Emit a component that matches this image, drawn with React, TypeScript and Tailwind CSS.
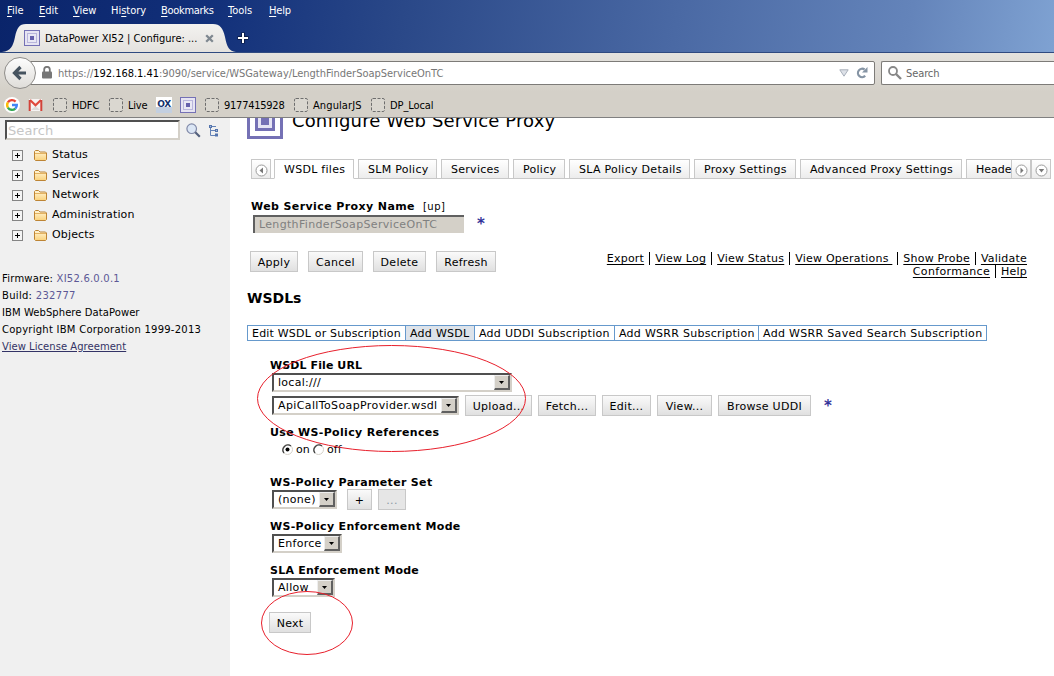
import React from "react";

const UI = "font-['DejaVu_Sans_Condensed','DejaVu_Sans',sans-serif] [font-stretch:condensed]";

function PowerIcon({ size }: { size: number }) {
  return (
    <svg width={size} height={size} viewBox="0 0 16 16" className="shrink-0">
      <rect x=".5" y=".5" width="15" height="15" fill="#e6e4f2" stroke="#7571b5" />
      <rect x="3.5" y="3.5" width="9" height="9" fill="#e9e8f4" stroke="#b9b6dc" />
      <rect x="6" y="6" width="4" height="4" fill="#6560ac" />
    </svg>
  );
}

function Menu({ k, pre = "", rest, w }: { k: string; pre?: string; rest: string; w: string }) {
  return (
    <span className={`${w} shrink-0 whitespace-nowrap`}>
      {pre}
      <span className="underline underline-offset-2">{k}</span>
      {rest}
    </span>
  );
}

function Bookmark({ label, w }: { label: string; w: string }) {
  return (
    <div className={`${w} flex shrink-0 items-center gap-[5px] whitespace-nowrap`}>
      <svg width="14" height="14" viewBox="0 0 14 14" className="shrink-0">
        <rect x=".5" y=".5" width="13" height="13" rx="1.5" fill="#dad7d0" stroke="#6e6e6e" strokeDasharray="3 1.5" />
      </svg>
      <span className="pt-[3px]">{label}</span>
    </div>
  );
}

function Browser() {
  return (
    <div className={`${UI} h-[118px] shrink-0 text-[11px] text-black`}>
      <div className="flex h-[53px] flex-col border-b border-[#2f4a80] bg-[linear-gradient(100deg,#0a246a_0%,#12307a_20%,#2a4888_38%,#4a69a4_64%,#6484ba_86%,#7fa2d2_100%)]">
        <div className="flex h-[25px] items-center pb-[2px] pl-[7px] text-white">
          <Menu k="F" rest="ile" w="w-8" />
          <Menu k="E" rest="dit" w="w-[34px]" />
          <Menu k="V" rest="iew" w="w-[38px]" />
          <Menu pre="Hi" k="s" rest="tory" w="w-[50px]" />
          <Menu k="B" rest="ookmarks" w="w-[67px] tracking-[-0.3px]" />
          <Menu k="T" rest="ools" w="w-[41px]" />
          <Menu k="H" rest="elp" w="w-8 tracking-[-0.2px]" />
        </div>
        <div className="flex h-[28px]">
          <div className="relative h-[28px] w-[236px] shrink-0">
            <svg width="236" height="28" className="absolute inset-0">
              <defs>
                <linearGradient id="tab" x1="0" y1="0" x2="0" y2="1">
                  <stop offset="0" stopColor="#f3f2f0" />
                  <stop offset="1" stopColor="#e4e2de" />
                </linearGradient>
              </defs>
              <path d="M2 28C11 27 13 22 15 13C17 4 19 0 26 0H213C220 0 223 4 225 13C227 23 229 27 236 28Z" fill="url(#tab)" />
            </svg>
            <div className="relative flex h-[28px] items-center pl-6">
              <PowerIcon size={16} />
              <span className="ml-[5px] w-[160px] whitespace-nowrap pt-[2px]">DataPower XI52 | Configure: ...</span>
              <svg width="9" height="9" viewBox="0 0 9 9">
                <path d="M1.2 1.2 7.8 7.8M7.8 1.2 1.2 7.8" stroke="#7f8890" strokeWidth="2.3" />
              </svg>
            </div>
          </div>
          <svg width="14" height="14" viewBox="0 0 14 14" className="mt-[7px]">
            <path d="M7 1.5V12.5M1.5 7H12.5" stroke="#0b1c48" strokeWidth="4" />
            <path d="M7 2V12M2 7H12" stroke="#fff" strokeWidth="2" />
          </svg>
        </div>
      </div>
      <div className="flex h-[65px] flex-col border-b border-[#808080] bg-[linear-gradient(#e4e2de,#d4d0c8_60%)]">
        <div className="flex h-[39px] items-center pl-1">
          <div className="z-10 flex h-8 w-8 shrink-0 items-center justify-center rounded-full border border-[#8f8d8a] bg-[linear-gradient(#fdfdfd,#dfddd9)]">
            <svg width="16" height="16" viewBox="0 0 16 16">
              <path d="M8.5 2 2.5 8 8.5 14M3 8H14" fill="none" stroke="#46535f" strokeWidth="3.2" />
            </svg>
          </div>
          <div className="-ml-[6px] flex h-6 w-[845px] shrink-0 items-center rounded-r-[2px] border border-[#7d7b78] bg-white pl-[11px]">
            <svg width="10" height="13" viewBox="0 0 10 13">
              <path d="M2.2 6V3.6A2.8 2.8 0 0 1 7.8 3.6V6" fill="none" stroke="#777" strokeWidth="1.8" />
              <rect y="5.5" width="10" height="7" rx="1" fill="#777" />
            </svg>
            <span className="ml-[6px] grow whitespace-nowrap pt-[3px] tracking-[-0.03px] text-[#777]">
              https://<span className="text-black">192.168.1.41</span>:9090/service/WSGateway/LengthFinderSoapServiceOnTC
            </span>
            <svg width="10" height="8" viewBox="0 0 10 8" className="mr-[7px]">
              <path d="M.8.8H9.2L5 7.2Z" fill="#dde1e8" stroke="#a8afba" />
            </svg>
            <svg width="12" height="12" viewBox="0 0 12 12" className="mr-[6px]">
              <path d="M9.2 8.8A4.2 4.2 0 1 1 8.6 2.5" fill="none" stroke="#8594a4" strokeWidth="2.2" />
              <path d="M11.5 0V5.5H6Z" fill="#8594a4" />
            </svg>
          </div>
          <div className="ml-[6px] flex h-6 grow items-center rounded-l-[2px] border border-r-0 border-[#7d7b78] bg-white pl-[6px]">
            <svg width="14" height="14" viewBox="0 0 14 14">
              <circle cx="5" cy="5" r="4" fill="none" stroke="#888" strokeWidth="1.8" />
              <path d="M8 8 13 13" stroke="#888" strokeWidth="2.4" />
            </svg>
            <span className="ml-1 pt-[3px] tracking-[-0.1px] text-[#666]">Search</span>
          </div>
        </div>
        <div className="flex h-[25px] items-center pl-1">
          <div className="flex h-4 w-6 shrink-0 items-center">
            <svg width="16" height="16" viewBox="0 0 16 16">
              <circle cx="8" cy="8" r="8" fill="#fff" />
              <g fill="none" strokeWidth="2.4">
                <path d="M11.6 4.6A4.9 4.9 0 0 0 3.9 5.4" stroke="#ea4335" />
                <path d="M3.9 5.4A5 5 0 0 0 3.9 10.6" stroke="#fbbc05" />
                <path d="M3.9 10.6A4.9 4.9 0 0 0 11.3 11.6" stroke="#34a853" />
                <path d="M11.3 11.6A4.7 4.7 0 0 0 12.8 8H8" stroke="#4285f4" />
              </g>
            </svg>
          </div>
          <div className="flex w-[25px] shrink-0 items-center pt-px">
            <svg width="16" height="12" viewBox="0 0 16 12">
              <path d="M1 0H14V12H1Z" fill="#f6f4f3" />
              <path d="M3 11 7.5 7 12 11Z" fill="#dcdcdc" />
              <path d="M2 1 7.5 6.3 13 1" fill="none" stroke="#e0493d" strokeWidth="2.2" />
              <path d="M1.7 12V1M13.3 12V1" stroke="#d2433a" strokeWidth="2" />
            </svg>
          </div>
          <Bookmark label="HDFC" w="w-14 tracking-[-0.1px]" />
          <Bookmark label="Live" w="w-[47px] tracking-[-0.2px]" />
          <div className="flex h-4 w-4 shrink-0 items-center justify-center bg-[linear-gradient(#fff_65%,#c3cfe0_65%)] font-['DejaVu_Sans',sans-serif] text-[9px] font-bold leading-none tracking-[-0.3px] text-[#15316b] [font-stretch:normal]">OX</div>
          <div className="ml-2 w-[25px] shrink-0"><PowerIcon size={16} /></div>
          <Bookmark label="9177415928" w="w-[89px] tracking-[-0.25px]" />
          <Bookmark label="AngularJS" w="w-[77px] tracking-[0.1px]" />
          <Bookmark label="DP_Local" w="w-[80px] tracking-[-0.1px]" />
        </div>
      </div>
    </div>
  );
}

function TreeItem({ label }: { label: string }) {
  return (
    <div className="flex h-5 items-center">
      <svg width="11" height="11" viewBox="0 0 11 11" className="mt-[3px]">
        <rect x=".5" y=".5" width="10" height="10" fill="#f4f4f4" stroke="#858585" />
        <path d="M3 5.5H8M5.5 3V8" stroke="#000" />
      </svg>
      <svg width="13" height="11" viewBox="0 0 13 11" className="ml-[11px] mt-[3px]">
        <defs>
          <linearGradient id="folder" x1="0" y1="0" x2="0" y2="1">
            <stop offset="0" stopColor="#fff6d8" />
            <stop offset="1" stopColor="#fbd27c" />
          </linearGradient>
        </defs>
        <path d="M.5 9.5V1.5L1.5.5H4.5L6 2H11.5L12.5 3V9.5L11.5 10.5H1.5Z" fill="url(#folder)" stroke="#bd8434" />
        <path d="M1 3.5H12" stroke="#e3b262" />
      </svg>
      <span className="ml-[5px] pt-[2px] tracking-[0.15px]">{label}</span>
    </div>
  );
}

function Sidebar() {
  return (
    <aside className="flex w-[230px] shrink-0 flex-col bg-[#f0f0f0] pt-[2px]">
      <div className="flex h-5 items-center pl-[5px]">
        <div className="flex h-5 w-[175px] items-center border-2 border-b-[#d4d0c8] border-l-[#505050] border-r-[#d4d0c8] border-t-[#505050] bg-white pl-px pt-[2px] text-[13px] tracking-[0.1px] text-[#c6c6c6]">Search</div>
        <svg width="15" height="15" viewBox="0 0 15 15" className="ml-[6px] mt-px">
          <circle cx="5.7" cy="5.7" r="4.8" fill="#dbe6f5" stroke="#8089a8" strokeWidth="1.2" />
          <path d="M9.3 9.3 13.8 13.8" stroke="#54617e" strokeWidth="2.2" />
        </svg>
        <svg width="10" height="12" viewBox="0 0 10 12" className="ml-2 mt-[2px]">
          <path d="M1.5 3V10.5H6M1.5 5.5H6M3 1.5H7" fill="none" stroke="#6482b6" />
          <g fill="#a9bedd" stroke="#5474ad">
            <rect x=".5" y=".5" width="2" height="2" />
            <rect x="6.5" y="4.5" width="2" height="2" />
            <rect x="6.5" y="9" width="2" height="2" />
          </g>
        </svg>
      </div>
      <div className="mt-1 flex flex-col pl-3">
        {["Status", "Services", "Network", "Administration", "Objects"].map((t) => <TreeItem key={t} label={t} />)}
      </div>
      <div className="mt-[26px] flex flex-col whitespace-nowrap pl-[2px] text-[10px] leading-[17px]">
        <span className="tracking-[0.22px]">Firmware: <span className="text-[#5c5896]">XI52.6.0.0.1</span></span>
        <span className="tracking-[0.3px]">Build: <span className="text-[#5c5896]">232777</span></span>
        <span className="tracking-[0.07px]">IBM WebSphere DataPower</span>
        <span className="tracking-[0.25px]">Copyright IBM Corporation 1999-2013</span>
        <span className="tracking-[0.04px] text-[#333366] underline">View License Agreement</span>
      </div>
    </aside>
  );
}

function Btn({ children, w, off }: { children: React.ReactNode; w: string; off?: boolean }) {
  return (
    <button className={`${w} flex h-[21px] shrink-0 items-center justify-center whitespace-nowrap border border-[#c8c8c8] pt-[2px] tracking-[0.28px] ${off ? "bg-[#e6e6e6] text-[#8c99a5]" : "bg-[linear-gradient(#fafafa,#e0e0e0)]"}`}>
      {children}
    </button>
  );
}

function Combo({ value, w }: { value: string; w: string }) {
  return (
    <div className={`${w} flex h-[19px] shrink-0 border-2 border-b-[#d4d0c8] border-l-[#505050] border-r-[#d4d0c8] border-t-[#505050] bg-white`}>
      <span className="flex min-w-0 grow items-center whitespace-nowrap pl-1 pt-px">{value}</span>
      <span className="flex w-4 shrink-0 items-center justify-center border-b-2 border-l border-r-2 border-t border-b-[#606060] border-l-[#eee] border-r-[#606060] border-t-[#eee] bg-[#d4d0c8]">
        <svg width="5" height="3" viewBox="0 0 5 3"><path d="M0 0H5L2.5 3Z" /></svg>
      </span>
    </div>
  );
}

function Tab({ label, w, active }: { label: string; w: string; active?: boolean }) {
  return (
    <div className={`${w} mr-1 flex h-5 shrink-0 items-center whitespace-nowrap border border-[#c8c8c8] pl-[9px] pt-px ${active ? "border-b-white bg-white" : "bg-[linear-gradient(#fff,#ececec)]"}`}>{label}</div>
  );
}

function Arrow({ d, w }: { d: string; w: string }) {
  return (
    <div className={`${w} flex h-5 shrink-0 items-end justify-center border border-[#c8c8c8] bg-[linear-gradient(#fff,#ececec)] pb-px`}>
      <svg width="13" height="13" viewBox="0 0 13 13">
        <circle cx="6.5" cy="6.5" r="5.5" fill="#fff" stroke="#9a9a9a" />
        <path d={d} fill="#777" />
      </svg>
    </div>
  );
}

function Main() {
  const head = "flex h-[14px] items-center whitespace-nowrap pt-[2px] font-bold tracking-[0.33px]";
  const bar = <span className="mx-[5px] inline-block h-[13px] w-px bg-black align-top" />;
  const link = "underline underline-offset-2";
  return (
    <main className="relative flex min-w-0 grow flex-col pl-[17px] tracking-[0.28px]">
      <div className="flex h-[41px] items-end overflow-hidden pb-5">
        <svg width="36" height="36" viewBox="0 0 36 36" className="shrink-0">
          <rect x="1.5" y="1.5" width="33" height="33" fill="#fff" stroke="#7571b5" strokeWidth="3" />
          <rect x="9.5" y="9.5" width="17" height="17" fill="#e6e5f4" stroke="#7571b5" strokeWidth="3" />
          <rect x="14" y="14" width="8" height="8" fill="#7571b5" />
        </svg>
        <h1 className="mb-2 ml-[9px] whitespace-nowrap text-[18px] leading-5 tracking-[0.14px]">Configure Web Service Proxy</h1>
      </div>
      <div className="ml-1 flex h-5 w-[800px] overflow-hidden bg-[linear-gradient(#c8c8c8,#c8c8c8)] bg-[length:100%_1px] bg-bottom bg-no-repeat">
        <Arrow d="M8 3.5V9.5L4.5 6.5Z" w="w-5 mr-[3px]" />
        <Tab label="WSDL files" w="w-[80px]" active />
        <Tab label="SLM Policy" w="w-[79px]" />
        <Tab label="Services" w="w-[68px]" />
        <Tab label="Policy" w="w-[52px]" />
        <Tab label="SLA Policy Details" w="w-[121px]" />
        <Tab label="Proxy Settings" w="w-[102px]" />
        <Tab label="Advanced Proxy Settings" w="w-[162px]" />
        <div className="flex h-5 w-[45px] shrink-0 items-center border border-r-0 border-[#c8c8c8] bg-[linear-gradient(#fff,#ececec)] pl-[9px] pt-px tracking-[0px]">Heade</div>
        <Arrow d="M5.5 3.5V9.5L8.5 6.5Z" w="w-5" />
        <Arrow d="M3.8 5H9.2L6.5 8.5Z" w="w-5" />
      </div>
      <div className="ml-1 mt-5 flex h-[14px] items-center whitespace-nowrap pt-[2px]">
        <b className="tracking-[0.4px]">Web Service Proxy Name</b>
        <span className="ml-2 text-[10px] tracking-[0.5px]">[up]</span>
      </div>
      <div className="mt-px flex h-[19px] items-center pl-[6px]">
        <div className="flex h-[18px] w-[211px] items-center whitespace-nowrap border-l-2 border-t-2 border-[#606060] bg-[#d4d0c8] pl-1 tracking-[0.33px] text-[#808080]">LengthFinderSoapServiceOnTC</div>
        <span className="ml-[13px] text-[15px] font-bold text-[#333399]">*</span>
      </div>
      <div className="mt-[18px] flex h-[30px] items-start pl-[3px] pr-[27px]">
        <div className="flex shrink-0 gap-[10px]">
          <Btn w="w-[48px]">Apply</Btn>
          <Btn w="w-[55px]">Cancel</Btn>
          <Btn w="w-[53px]">Delete</Btn>
          <Btn w="w-[60px]">Refresh</Btn>
        </div>
        <div className="ml-auto flex flex-col items-end whitespace-nowrap pt-px leading-[13px] tracking-[0.22px]">
          <div>
            <span className={link}>Export</span>{bar}
            <span className={link}>View Log</span>{bar}
            <span className={link}>View Status</span>{bar}
            <span className={link}>View Operations&nbsp;</span>{bar}
            <span className={link}>Show Probe</span>{bar}
            <span className={link}>Validate</span>
          </div>
          <div><span className={`${link} tracking-[0.33px]`}>Conformance</span>{bar}<span className={link}>Help</span></div>
        </div>
      </div>
      <h2 className="mt-[9px] h-4 text-[14px] font-bold leading-4 tracking-[0px]">WSDLs</h2>
      <div className="mt-[19px] flex h-4 w-[740px] border border-[#6699cc]">
        {[
          ["Edit WSDL or Subscription", "w-[158px] tracking-[0.2px]"],
          ["Add WSDL", "w-[69px] bg-[#dde3ea]"],
          ["Add UDDI Subscription", "w-[140px]"],
          ["Add WSRR Subscription", "w-[144px]"],
        ].map(([t, w]) => (
          <div key={t} className={`${w} flex shrink-0 items-center whitespace-nowrap border-r border-[#6699cc] pl-1 pt-[2px]`}>{t}</div>
        ))}
        <div className="flex items-center whitespace-nowrap pl-1 pt-[2px] tracking-[0.32px]">Add WSRR Saved Search Subscription</div>
      </div>
      <div className="mt-[17px] flex flex-col items-start pl-[23px]">
        <div className={head}><span className="tracking-[0.1px]">WSDL File URL</span></div>
        <div className="mt-px flex pl-[2px]"><Combo value="local:///" w="w-[240px]" /></div>
        <div className="mt-[3px] flex h-[21px] items-center pl-[2px] tracking-[0.38px]">
          <Combo value="ApiCallToSoapProvider.wsdl" w="w-[187px]" />
          <div className="ml-[6px] flex gap-[6px]">
            <Btn w="w-[67px]">Upload...</Btn>
            <Btn w="w-[58px]">Fetch...</Btn>
            <Btn w="w-[49px]">Edit...</Btn>
            <Btn w="w-[55px]">View...</Btn>
            <Btn w="w-[93px]">Browse UDDI</Btn>
          </div>
          <span className="ml-[13px] text-[15px] font-bold text-[#333399]">*</span>
        </div>
        <div className={`${head} mt-[9px]`}>Use WS-Policy References</div>
        <div className="mt-[3px] flex h-[14px] items-center pl-3 tracking-[0.1px]">
          <Radio on /><span className="ml-[3px] pt-[2px]">on</span>
          <span className="ml-[3px] flex"><Radio /></span><span className="ml-[3px] pt-[2px]">off</span>
        </div>
        <div className={`${head} mt-[19px]`}>WS-Policy Parameter Set</div>
        <div className="flex h-[21px] items-center pl-[2px]">
          <Combo value="(none)" w="w-[65px]" />
          <div className="ml-[10px] flex gap-[6px]">
            <Btn w="w-[25px]">+</Btn>
            <Btn w="w-[28px]" off>...</Btn>
          </div>
        </div>
        <div className={`${head} mt-[9px]`}>WS-Policy Enforcement Mode</div>
        <div className="mt-px flex pl-[2px]"><Combo value="Enforce" w="w-[70px]" /></div>
        <div className={`${head} mt-[10px]`}><span className="tracking-[0.25px]">SLA Enforcement Mode</span></div>
        <div className="mt-px flex pl-[2px]"><Combo value="Allow" w="w-[63px]" /></div>
        <div className="-ml-px mt-[15px]"><Btn w="w-[42px]">Next</Btn></div>
      </div>
      <svg width="824" height="558" className="pointer-events-none absolute left-0 top-0" fill="none" stroke="#e8202c">
        <ellipse cx="161.5" cy="280.5" rx="134" ry="53" />
        <ellipse cx="77" cy="505" rx="45.5" ry="31.5" />
      </svg>
    </main>
  );
}

function Radio({ on }: { on?: boolean }) {
  return (
    <svg width="11" height="11" viewBox="0 0 11 11">
      <circle cx="5.5" cy="5.5" r="5" fill="#fff" stroke="#d4d0c8" />
      <path d="M2 9A5 5 0 0 1 9 2" fill="none" stroke="#404040" strokeWidth="1.3" />
      {on && <circle cx="5.5" cy="5.5" r="2" fill="#000" />}
    </svg>
  );
}

export default function App() {
  return (
    <div className="flex h-[676px] w-[1054px] flex-col overflow-hidden bg-white">
      <Browser />
      <div className="flex min-h-0 grow font-['DejaVu_Sans',sans-serif] text-[11px] leading-[14px] text-black">
        <Sidebar />
        <Main />
      </div>
    </div>
  );
}
